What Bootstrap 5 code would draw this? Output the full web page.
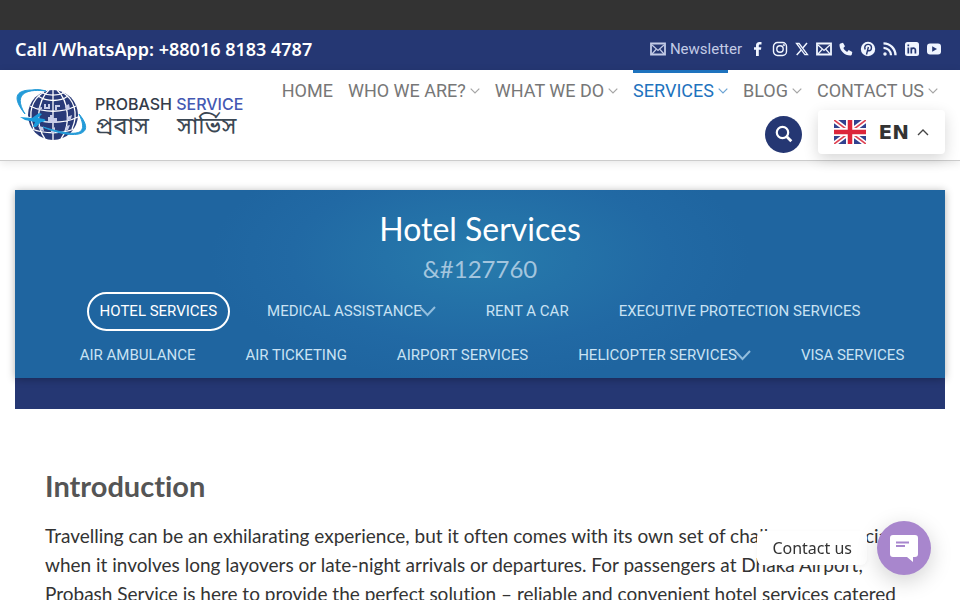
<!DOCTYPE html>
<html lang="en">
<head>
<meta charset="utf-8">
<meta name="viewport" content="width=device-width, initial-scale=1">
<title>Hotel Services - Probash Service</title>
<link href="https://cdn.jsdelivr.net/npm/bootstrap@5.3.0/dist/css/bootstrap.min.css" rel="stylesheet">
<style>
:root{--navy:#253773;--blue:#1e73be}
body{font-family:Lato,sans-serif;color:#333;background:#fff}
a{text-decoration:none}
.top-strip{height:30px;background:#333}
.top-bar{min-height:40px;background:var(--navy);color:#fff;padding:0 18px 2px 15px}
.phone{font:600 18px/24px "Noto Sans",sans-serif;color:#fff}
.news{font:400 15px/20px Roboto,sans-serif;color:#c3cbe6;gap:4px}
.social{gap:6px}
.social a{display:flex;color:#f0f5ff}
.site-head{background:#fff;min-height:91px;padding:0 15px;border-bottom:1px solid #ccc;box-shadow:0 2px 9px rgba(0,0,0,.1)}
.brand-en{font:500 16px/20px Inter,sans-serif;color:#343b49}
.brand-en span{color:#4459b3}
.brand-bn{font:400 24px/28px "Noto Sans Bengali","Noto Sans",sans-serif;color:#3b4753;gap:28px}
.brand{padding-top:16px;gap:7px}
.main-nav{gap:15px;padding-right:7px}
.main-nav a{display:flex;align-items:center;gap:4px;height:40px;border-top:3px solid transparent;padding-bottom:1px;font:400 18px/24px Roboto,sans-serif;color:#777;white-space:nowrap}
.main-nav a.active{color:var(--blue);border-color:var(--blue)}
.main-nav svg{opacity:.65}
.tools{gap:16px}
.search-btn{width:37px;height:37px;background:var(--navy);color:#fff}
.lang{width:127px;height:44px;border:0;border-radius:4px;background:#fff;box-shadow:0 5px 15px rgba(0,0,0,.16);font:700 20px/24px "DejaVu Sans",sans-serif;color:#333;padding:0 16px}
.hero{margin:29px 15px 0;background:var(--navy);padding-bottom:31px}
.hero-in{background:radial-gradient(ellipse 270px 125px at 50% 36%,#277bac 0%,#2169a4 70%,#1f65a0 100%);padding:19px 0 1px;box-shadow:0 1px 8px rgba(0,0,0,.3)}
.hero h1{font:400 32px/40px Lato,sans-serif;color:#fff;margin:0}
.hero-sub{font:400 24px/40px Lato,sans-serif;color:#a3c5de;margin:0}
.sub-nav{gap:24px;min-height:44px}
.sub-nav a{display:flex;align-items:center;height:39px;padding:0 11px;border:2px solid transparent;border-radius:20px;font:400 15px/20px Roboto,sans-serif;color:#c9e2f3;white-space:nowrap}
.sub-nav a.active{color:#fff;border-color:#fff}
.sub-nav svg{margin-left:-3px}
.row-two{padding-left:24px}
.intro{padding:57px 45px 0}
.intro h2{font:700 29px/40px Lato,sans-serif;font-variant-ligatures:none;color:#555;margin:0 0 15px}
.intro p{font:400 19px/29px Lato,sans-serif;font-variant-ligatures:none;white-space:nowrap;margin:0}
.chat{position:fixed;right:29px;bottom:25px;gap:10px}
.chat-tip{background:#fff;border-radius:6px;font:400 16px/20px "Noto Sans",sans-serif;padding:7px 15px;box-shadow:0 2px 5px rgba(0,0,0,.05)}
.chat-btn{width:54px;height:54px;background:#a886cd;box-shadow:0 6px 22px rgba(0,0,0,.18)}
</style>
<script src="https://cdn.jsdelivr.net/npm/bootstrap@5.3.0/dist/js/bootstrap.bundle.min.js"></script>
</head>
<body class="overflow-hidden">
<svg class="d-none" aria-hidden="true">
<symbol id="mail" viewBox="0 0 16 14"><path d="M1 1.500h14v11H1z" fill="none" stroke="currentColor" stroke-width="1.800"/><path d="M2 3l6 5.500L14 3M2 12l4-4.500M14 12l-4-4.500" fill="none" stroke="currentColor" stroke-width="1.200"/></symbol>
<symbol id="down" viewBox="0 0 10 6"><path d="M.7.7L5 5 9.300.7" fill="none" stroke="currentColor" stroke-width="1.200"/></symbol>
</svg>
<div class="top-strip"></div>
<div class="top-bar d-flex align-items-center justify-content-between">
<a class="phone" href="tel:+8801681834787">Call /WhatsApp: +88016 8183 4787</a>
<div class="d-flex align-items-center">
<a class="news d-flex align-items-center me-2" href="#news"><svg width="16" height="14"><use href="#mail"/></svg>Newsletter</a>
<div class="social d-flex align-items-center">
<a href="#fb" aria-label="Facebook"><svg width="16" height="16" viewBox="0 0 16 16"><path fill="currentColor" d="M6 15V8.800H4V6.200h2V4.500C6 2.200 7.200 1 9.500 1h2v2.500H10c-1 0-1.200.5-1.200 1.300v1.400h2.500L11 8.800H8.800V15z"/></svg></a>
<a href="#ig" aria-label="Instagram"><svg width="16" height="16" viewBox="0 0 16 16" fill="none" stroke="currentColor" stroke-width="1.400"><rect x="1.500" y="1.500" width="13" height="13" rx="4"/><circle cx="8" cy="8" r="3.200"/><circle cx="11.800" cy="4.200" r=".4"/></svg></a>
<a href="#x" aria-label="X"><svg width="16" height="16" viewBox="0 0 16 16" fill="none" stroke="currentColor"><path d="M2.500 2.500h2.600l8.400 11.200h-2.600z" stroke-width="1.300"/><path d="M13 2L9 6.700M7.200 9L2.700 14" stroke-width="1.500"/></svg></a>
<a href="#mail-us" aria-label="Email"><svg width="16" height="14"><use href="#mail"/></svg></a>
<a href="#call" aria-label="Call"><svg width="16" height="16" viewBox="0 0 16 16"><path fill="currentColor" d="M2.500 2.500L5 1.700l2 3.600-1.600 1.800c.8 1.800 2 3 3.700 3.800l1.600-1.800 3.600 1.800-.5 2.600c-.2.800-.8 1-1.500 1C6.500 14.500 1.600 9.500 1.500 4c0-.8.300-1.300 1-1.500z"/></svg></a>
<a href="#pin" aria-label="Pinterest"><svg width="16" height="16" viewBox="0 0 16 16"><circle cx="8" cy="8" r="7.200" fill="currentColor"/><path d="M5.200 8.600C3.600 4.200 7 3.200 8.600 3.400c4.200.4 3.300 6.400.4 6.400-1 0-1.500-.6-1.500-.6M8.400 6L6.500 13.500" fill="none" stroke="#253773" stroke-width="1.400"/></svg></a>
<a href="#rss" aria-label="RSS"><svg width="16" height="16" viewBox="0 0 16 16" fill="none" stroke="currentColor" stroke-width="2.300"><circle cx="3" cy="13" r="1" fill="currentColor" stroke-width="1.500"/><path d="M1.500 6.800a7.500 7.500 0 017.500 7.500M1.500 2.300a12 12 0 0112 12"/></svg></a>
<a href="#in" aria-label="LinkedIn"><svg width="16" height="16" viewBox="0 0 16 16"><rect x="1" y="1" width="14" height="14" rx="2.500" fill="currentColor"/><path d="M4.300 6.500v6M7.300 6.500v6M7.300 9c0-2.400 4.100-2.600 4.100 0v3.500M4.300 3.500v1.700" fill="none" stroke="#253773" stroke-width="1.700"/></svg></a>
<a href="#yt" aria-label="YouTube"><svg width="16" height="16" viewBox="0 0 16 16"><rect x="1" y="2.500" width="14" height="11" rx="3" fill="currentColor"/><path d="M6.200 5.200L11 8l-4.800 2.800z" fill="#253773"/></svg></a>
</div>
</div>
</div>
<header class="site-head d-flex justify-content-between align-items-start">
<a class="brand d-flex align-items-center" href="#home">
<svg width="73" height="54" viewBox="0 0 73 54" aria-hidden="true"><circle cx="38" cy="28" r="25" fill="#293a78"/><g fill="none" stroke="#fff" stroke-width="1.300"><path d="M38 3v50M34 3C22 14 20 38 30 52M42 3c12 11 14 35 4 49M29 5C17 12 12 26 19 42M47 5c12 7 17 21 10 37M23 9c9 6 22 6 30 0M15 19c14 7 32 7 46 0M13 30c14 7 36 7 50 0M17 42c12 5 30 5 42 0M25 5c8 4 18 4 26 0"/></g><g fill="#c8cde8"><path d="M29 17h2v3h2v-3h2v5h-6zM40 18h5v2h-3v3h-2zM33 30h2v-2h3v3h4v5h-9zM50 19l4-2 1 5-4 1zM22 21l5-1v2l-4 1zM52 30l5-2-1 4-4 2zM51 39l4-1-2 5-3 1zM23 39l5 1 1 4-4-1zM36 43l4-3v6h-4z"/></g><path d="M10 27C-2 12-1 3 17 3c6-1 10 0 14 1C16 2-4 4 10 27zM64 27c20 24-9 25-36 13 36 11 46 8 36-13z" fill="#249bd8" stroke="#249bd8"/><path d="M5 30l12 1 7-5 3 1-4 4 6 1c3 1 1 3-3 3l-5 5h-3l2-5-10-2z" fill="#199bdd"/></svg>
<span class="pt-2"><span class="brand-en d-block">PROBASH <span>SERVICE</span></span><span class="brand-bn d-flex" lang="bn"><span>প্রবাস</span> <span>সার্ভিস</span></span></span>
</a>
<div>
<nav class="main-nav d-flex" aria-label="Main">
<a href="#home">HOME</a>
<a href="#who">WHO WE ARE?<svg width="10" height="6"><use href="#down"/></svg></a>
<a href="#what">WHAT WE DO<svg width="10" height="6"><use href="#down"/></svg></a>
<a class="active" href="#services">SERVICES<svg width="10" height="6"><use href="#down"/></svg></a>
<a href="#blog">BLOG<svg width="10" height="6"><use href="#down"/></svg></a>
<a href="#contact">CONTACT US<svg width="10" height="6"><use href="#down"/></svg></a>
</nav>
<div class="tools d-flex justify-content-end align-items-center">
<button class="search-btn btn rounded-circle p-0 d-flex align-items-center justify-content-center mt-1" aria-label="Search"><svg width="18" height="18" viewBox="0 0 18 18" fill="none" stroke="currentColor" stroke-width="2.200"><circle cx="7.500" cy="7.500" r="5.700"/><path d="M11.800 11.800l4.500 4.500" stroke-width="2.800"/></svg></button>
<button class="lang d-flex align-items-center"><svg width="32" height="24" viewBox="0 0 32 24" aria-hidden="true"><path fill="#32418f" d="M0 0h32v24H0z"/><path d="M0 0l32 24M32 0L0 24" stroke="#fff" stroke-width="5"/><path d="M0 0l32 24M32 0L0 24" stroke="#df4353" stroke-width="1.700"/><path d="M16 0v24M0 12h32" stroke="#fff" stroke-width="8"/><path d="M16 0v24M0 12h32" stroke="#dc263b" stroke-width="4.500"/></svg><span class="ms-auto me-2">EN</span><svg width="12" height="7" viewBox="0 0 12 7"><path d="M1 6l5-5 5 5" fill="none" stroke="#444" stroke-width="1.400"/></svg></button>
</div>
</div>
</header>
<main>
<section class="hero">
<div class="hero-in text-center">
<h1>Hotel Services</h1>
<p class="hero-sub">&amp;#127760</p>
<nav aria-label="Services">
<div class="sub-nav d-flex justify-content-center align-items-center">
<a class="active" href="#hotel">HOTEL SERVICES</a>
<a href="#medical">MEDICAL ASSISTANCE<svg width="17" height="11" viewBox="0 0 17 11"><path d="M1 1l7.500 8L16 1" fill="none" stroke="#92bddd" stroke-width="2"/></svg></a>
<a href="#rent">RENT A CAR</a>
<a href="#executive">EXECUTIVE PROTECTION SERVICES</a>
</div>
<div class="sub-nav row-two d-flex justify-content-center align-items-center">
<a href="#ambulance">AIR AMBULANCE</a>
<a href="#ticketing">AIR TICKETING</a>
<a href="#airport">AIRPORT SERVICES</a>
<a href="#helicopter">HELICOPTER SERVICES<svg width="17" height="11" viewBox="0 0 17 11"><path d="M1 1l7.500 8L16 1" fill="none" stroke="#92bddd" stroke-width="2"/></svg></a>
<a href="#visa">VISA SERVICES</a>
</div>
</nav>
</div>
</section>
<article class="intro">
<h2>Introduction</h2>
<p>Travelling can be an exhilarating experience, but it often comes with its own set of challenges, especially<br>when it involves long layovers or late-night arrivals or departures. For passengers at Dhaka Airport,<br>Probash Service is here to provide the perfect solution – reliable and convenient hotel services catered</p>
</article>
</main>
<div class="chat d-flex align-items-center">
<span class="chat-tip">Contact us</span>
<button class="chat-btn btn rounded-circle p-0 d-flex align-items-center justify-content-center" aria-label="Open chat"><svg width="28" height="28" viewBox="0 0 28 28"><path fill="#fff" d="M3 1h22q3 0 3 3v16q0 3-3 3h-2v5l-6-5H3q-3 0-3-3V4q0-3 3-3z"/><path d="M6 8.500h13M6 12h9" stroke="#a886cd" stroke-width="1.800"/></svg></button>
</div>
</body>
</html>
